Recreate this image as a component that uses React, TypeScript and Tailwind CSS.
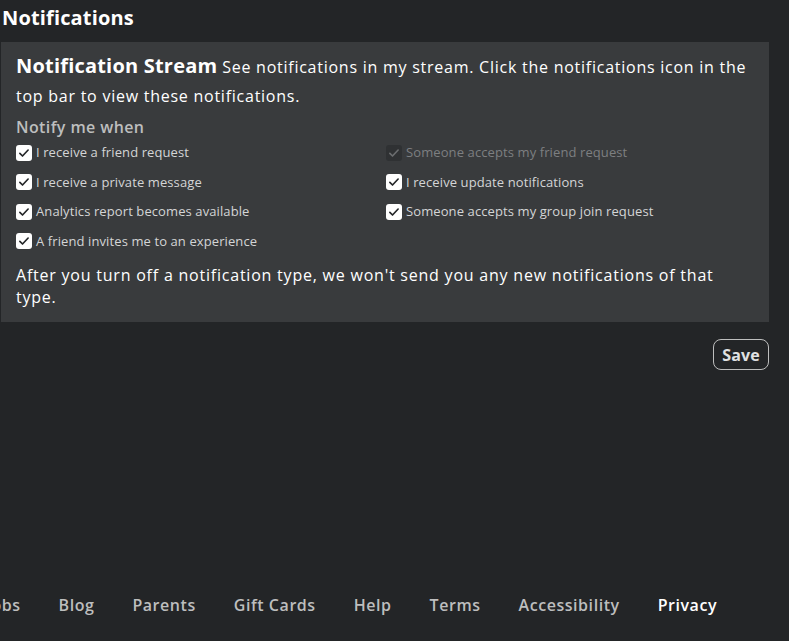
import React from "react";

function Check({ disabled }: { disabled?: boolean }) {
  return (
    <span
      className={
        "flex h-4 w-4 shrink-0 items-center justify-center rounded-[3px] " +
        (disabled ? "bg-[#2f3133]" : "bg-white")
      }
    >
      <svg viewBox="0 0 16 16" className="h-3 w-3" fill="none">
        <path
          d="M2.5 8.5 L6 12 L13.5 4"
          stroke={disabled ? "#6b6d6f" : "#232527"}
          strokeWidth="2.2"
          strokeLinecap="round"
          strokeLinejoin="round"
        />
      </svg>
    </span>
  );
}

function Item({ label, disabled }: { label: string; disabled?: boolean }) {
  return (
    <label className="flex h-[29.5px] items-center gap-[4px]">
      <Check disabled={disabled} />
      <span
        className={
          "text-[13px] tracking-[0.1px] " + (disabled ? "text-[#7d7f81]" : "text-[#d4d5d6]")
        }
      >
        {label}
      </span>
    </label>
  );
}

export default function App() {
  const left = [
    "I receive a friend request",
    "I receive a private message",
    "Analytics report becomes available",
    "A friend invites me to an experience",
  ];
  const links = ["About Us", "Jobs", "Blog", "Parents", "Gift Cards", "Help", "Terms", "Accessibility"];
  return (
    <div
      className="flex h-[641px] w-[789px] flex-col overflow-hidden bg-[#232527] text-white"
      style={{ fontFamily: '"Open Sans", "Liberation Sans", sans-serif' }}
    >
      <h1 className="pl-[2px] pt-[5px] text-[20px] font-bold leading-[26px] tracking-[0.15px]">Notifications</h1>
      <div className="ml-px mt-[11px] w-[768px] bg-[#393b3d] px-[15px] pb-[14px] pt-[9px]">
        <p className="text-[16px] leading-[29px] tracking-[0.75px]">
          <span className="text-[20px] font-bold tracking-[0.2px]">Notification Stream</span>{" "}
          See notifications in my stream. Click the notifications icon in the top bar to view these notifications.
        </p>
        <div className="mt-[6px] text-[16px] font-semibold leading-[20px] tracking-[0.4px] text-[#bdbebe]">
          Notify me when
        </div>
        <div className="mt-[1px] grid grid-cols-2">
          <div className="flex flex-col">
            {left.map((l) => (
              <Item key={l} label={l} />
            ))}
          </div>
          <div className="flex flex-col pl-[1px]">
            <Item label="Someone accepts my friend request" disabled />
            <Item label="I receive update notifications" />
            <Item label="Someone accepts my group join request" />
          </div>
        </div>
        <p className="mt-[8px] text-[16px] leading-[22px] tracking-[0.78px]">
          After you turn off a notification type, we won't send you any new notifications of that type.
        </p>
      </div>
      <div className="flex w-[769px] justify-end pt-[17px]">
        <button className="h-[31px] rounded-[8px] border border-[#bdbebe] px-[8px] text-[16px] font-bold tracking-[0.2px] text-[#e0e1e2]">
          Save
        </button>
      </div>
      <div className="mt-auto mb-[24px] -ml-[127px] flex gap-[38px] whitespace-nowrap text-[16px] font-semibold tracking-[0.55px] text-[#bdbebe]">
        {links.map((l) => (
          <span key={l}>{l}</span>
        ))}
        <span className="text-white">Privacy</span>
      </div>
    </div>
  );
}
